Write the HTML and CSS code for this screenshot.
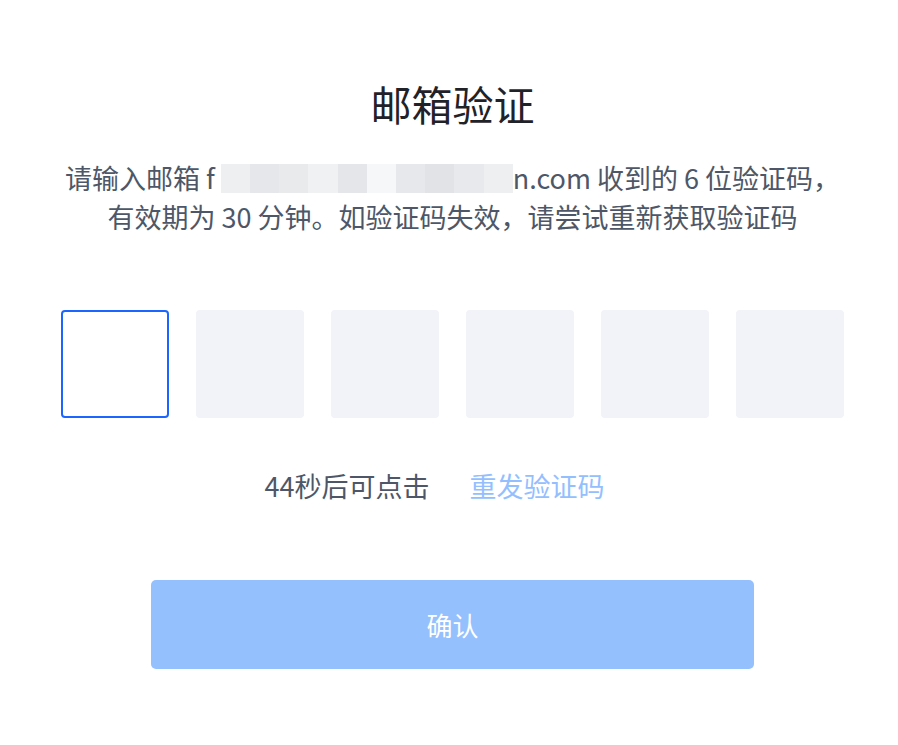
FILE: index.html
```html
<!DOCTYPE html>
<html lang="zh-CN">
<head>
    <meta charset="UTF-8">
    <meta name="viewport" content="width=device-width, initial-scale=1.0">
    <title>邮箱验证</title>
    <link rel="stylesheet" href="styles.css">
</head>
<body>
    <div class="verify">
        <h1 class="title">邮箱验证</h1>
        <p class="desc">
            请输入邮箱 f<span class="masked"><i class="m1"></i><i class="m2"></i><i class="m3"></i><i class="m4"></i><i class="m5"></i><i class="m6"></i><i class="m7"></i><i class="m8"></i><i class="m9"></i><i class="m10"></i></span>n.com 收到的 6 位验证码，<br>
            有效期为 30 分钟。如验证码失效，请尝试重新获取验证码
        </p>
        <div class="code-row">
            <input class="code-box active" type="text" maxlength="1">
            <input class="code-box" type="text" maxlength="1">
            <input class="code-box" type="text" maxlength="1">
            <input class="code-box" type="text" maxlength="1">
            <input class="code-box" type="text" maxlength="1">
            <input class="code-box" type="text" maxlength="1">
        </div>
        <div class="resend">
            <span class="countdown">44秒后可点击</span>
            <a class="resend-link" href="#">重发验证码</a>
        </div>
        <button class="confirm-btn" disabled>确认</button>
    </div>
</body>
</html>
```

FILE: styles.css
```css
body {
    margin: 0;
    padding: 0;
    background: #ffffff;
    font-family: "Noto Sans CJK SC", "Noto Sans", sans-serif;
}

.verify {
    width: 783px;
    margin-left: 61px;
    padding-top: 76px;
    display: flex;
    flex-direction: column;
    align-items: center;
}

.title {
    margin: 0;
    font-size: 41px;
    font-weight: 400;
    line-height: 54px;
    color: #1f2329;
}

.desc {
    margin: 28px 0 0;
    font-size: 27px;
    line-height: 39px;
    color: #4e5767;
    text-align: center;
    white-space: nowrap;
}

.masked {
    display: inline-flex;
    vertical-align: -4px;
    height: 29px;
    width: 292px;
    margin-left: 6px;
    background: #f3f4f6;
}

.masked i {
    display: block;
    flex: 1;
    height: 100%;
}

.masked .m1 { background: #eeeff1; }
.masked .m2 { background: #e6e7ea; }
.masked .m3 { background: #e9eaec; }
.masked .m4 { background: #f0f1f3; }
.masked .m5 { background: #e5e6e9; }
.masked .m6 { background: #f6f7f8; }
.masked .m7 { background: #e7e8eb; }
.masked .m8 { background: #e2e3e6; }
.masked .m9 { background: #e8e9ec; }
.masked .m10 { background: #eeeff1; }

.code-row {
    margin-top: 74px;
    width: 100%;
    display: flex;
    justify-content: space-between;
}

.code-box {
    width: 108px;
    height: 108px;
    box-sizing: border-box;
    border: 2px solid #f2f3f8;
    border-radius: 4px;
    background: #f2f3f8;
    outline: none;
    text-align: center;
    font-size: 32px;
    padding: 0;
}

.code-box.active {
    background: #ffffff;
    border-color: #1a66ff;
}

.resend {
    margin-top: 50px;
    margin-right: 36px;
    display: flex;
    gap: 40px;
    font-size: 27px;
    line-height: 36px;
}

.countdown {
    color: #4e5767;
}

.resend-link {
    color: #94bfff;
    text-decoration: none;
}

.confirm-btn {
    margin-top: 76px;
    width: 603px;
    height: 89px;
    border: none;
    border-radius: 5px;
    background: #94c0fd;
    color: #ffffff;
    font-family: inherit;
    font-size: 26px;
}
```
